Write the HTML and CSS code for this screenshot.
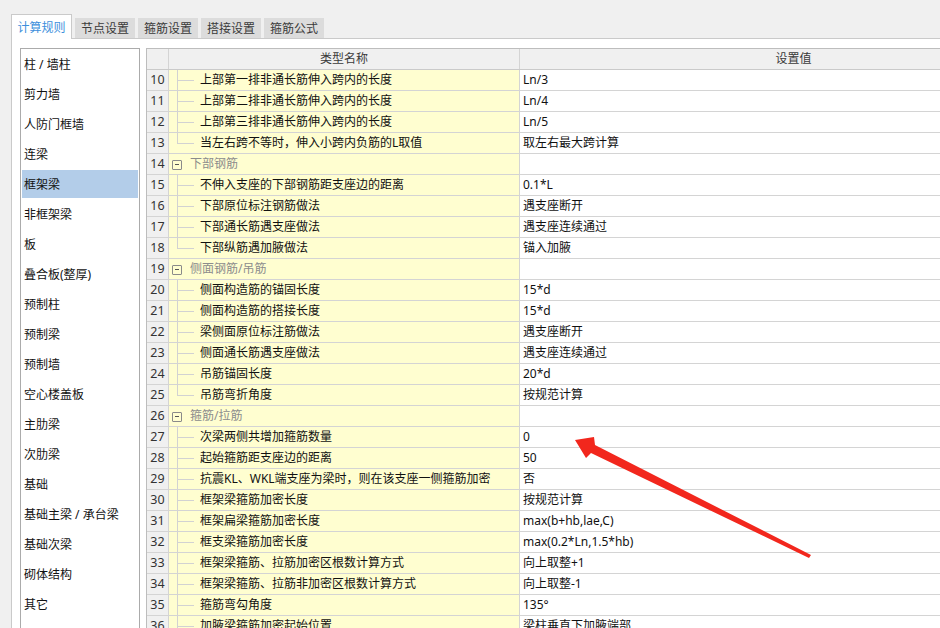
FILE: index.html
```html
<!DOCTYPE html>
<html lang="zh">
<head>
<meta charset="utf-8">
<title>计算规则</title>
<link rel="stylesheet" href="styles.css">
</head>
<body>
<div class="app">
  <div class="tabs">
    <div class="tab active">计算规则</div>
    <div class="tab">节点设置</div>
    <div class="tab">箍筋设置</div>
    <div class="tab">搭接设置</div>
    <div class="tab">箍筋公式</div>
  </div>
  <div class="panel">
    <ul class="side-list">
      <li>柱 / 墙柱</li>
      <li>剪力墙</li>
      <li>人防门框墙</li>
      <li>连梁</li>
      <li class="selected">框架梁</li>
      <li>非框架梁</li>
      <li>板</li>
      <li>叠合板(整厚)</li>
      <li>预制柱</li>
      <li>预制梁</li>
      <li>预制墙</li>
      <li>空心楼盖板</li>
      <li>主肋梁</li>
      <li>次肋梁</li>
      <li>基础</li>
      <li>基础主梁 / 承台梁</li>
      <li>基础次梁</li>
      <li>砌体结构</li>
      <li>其它</li>
    </ul>
    <div class="grid">
      <div class="row header">
        <div class="num"></div>
        <div class="name">类型名称</div>
        <div class="value">设置值</div>
      </div>
      <div class="row child"><div class="num">10</div><div class="name"><span class="branch"></span>上部第一排非通长筋伸入跨内的长度</div><div class="value">Ln/3</div></div>
      <div class="row child"><div class="num">11</div><div class="name"><span class="branch"></span>上部第二排非通长筋伸入跨内的长度</div><div class="value">Ln/4</div></div>
      <div class="row child"><div class="num">12</div><div class="name"><span class="branch"></span>上部第三排非通长筋伸入跨内的长度</div><div class="value">Ln/5</div></div>
      <div class="row child last"><div class="num">13</div><div class="name"><span class="branch"></span>当左右跨不等时，伸入小跨内负筋的L取值</div><div class="value">取左右最大跨计算</div></div>
      <div class="row group"><div class="num">14</div><div class="name"><span class="toggle"></span>下部钢筋</div><div class="value"></div></div>
      <div class="row child"><div class="num">15</div><div class="name"><span class="branch"></span>不伸入支座的下部钢筋距支座边的距离</div><div class="value">0.1*L</div></div>
      <div class="row child"><div class="num">16</div><div class="name"><span class="branch"></span>下部原位标注钢筋做法</div><div class="value">遇支座断开</div></div>
      <div class="row child"><div class="num">17</div><div class="name"><span class="branch"></span>下部通长筋遇支座做法</div><div class="value">遇支座连续通过</div></div>
      <div class="row child last"><div class="num">18</div><div class="name"><span class="branch"></span>下部纵筋遇加腋做法</div><div class="value">锚入加腋</div></div>
      <div class="row group"><div class="num">19</div><div class="name"><span class="toggle"></span>侧面钢筋/吊筋</div><div class="value"></div></div>
      <div class="row child"><div class="num">20</div><div class="name"><span class="branch"></span>侧面构造筋的锚固长度</div><div class="value">15*d</div></div>
      <div class="row child"><div class="num">21</div><div class="name"><span class="branch"></span>侧面构造筋的搭接长度</div><div class="value">15*d</div></div>
      <div class="row child"><div class="num">22</div><div class="name"><span class="branch"></span>梁侧面原位标注筋做法</div><div class="value">遇支座断开</div></div>
      <div class="row child"><div class="num">23</div><div class="name"><span class="branch"></span>侧面通长筋遇支座做法</div><div class="value">遇支座连续通过</div></div>
      <div class="row child"><div class="num">24</div><div class="name"><span class="branch"></span>吊筋锚固长度</div><div class="value">20*d</div></div>
      <div class="row child last"><div class="num">25</div><div class="name"><span class="branch"></span>吊筋弯折角度</div><div class="value">按规范计算</div></div>
      <div class="row group"><div class="num">26</div><div class="name"><span class="toggle"></span>箍筋/拉筋</div><div class="value"></div></div>
      <div class="row child"><div class="num">27</div><div class="name"><span class="branch"></span>次梁两侧共增加箍筋数量</div><div class="value">0</div></div>
      <div class="row child"><div class="num">28</div><div class="name"><span class="branch"></span>起始箍筋距支座边的距离</div><div class="value">50</div></div>
      <div class="row child"><div class="num">29</div><div class="name"><span class="branch"></span>抗震KL、WKL端支座为梁时，则在该支座一侧箍筋加密</div><div class="value">否</div></div>
      <div class="row child"><div class="num">30</div><div class="name"><span class="branch"></span>框架梁箍筋加密长度</div><div class="value">按规范计算</div></div>
      <div class="row child"><div class="num">31</div><div class="name"><span class="branch"></span>框架扁梁箍筋加密长度</div><div class="value">max(b+hb,lae,C)</div></div>
      <div class="row child"><div class="num">32</div><div class="name"><span class="branch"></span>框支梁箍筋加密长度</div><div class="value">max(0.2*Ln,1.5*hb)</div></div>
      <div class="row child"><div class="num">33</div><div class="name"><span class="branch"></span>框架梁箍筋、拉筋加密区根数计算方式</div><div class="value">向上取整+1</div></div>
      <div class="row child"><div class="num">34</div><div class="name"><span class="branch"></span>框架梁箍筋、拉筋非加密区根数计算方式</div><div class="value">向上取整-1</div></div>
      <div class="row child"><div class="num">35</div><div class="name"><span class="branch"></span>箍筋弯勾角度</div><div class="value">135°</div></div>
      <div class="row child"><div class="num">36</div><div class="name"><span class="branch"></span>加腋梁箍筋加密起始位置</div><div class="value">梁柱垂直下加腋端部</div></div>
    </div>
  </div>
  <svg class="arrow" width="940" height="628" viewBox="0 0 940 628">
    <polygon points="575,440 594,437 595,445 811,555 809,558 591,453 586,458" fill="#f2271d"/>
  </svg>
</div>
</body>
</html>
```

FILE: styles.css
```css
* { box-sizing: border-box; }
html, body {
  margin: 0;
  padding: 0;
  width: 940px;
  height: 628px;
  overflow: hidden;
  background: #f0f0f0;
  font-family: "Noto Sans", "Noto Sans CJK SC", sans-serif;
  font-size: 12px;
  color: #111;
}
.app {
  position: relative;
  width: 940px;
  height: 628px;
  overflow: hidden;
}
.tabs {
  display: flex;
  align-items: flex-end;
  height: 38px;
  padding-left: 11px;
  gap: 3px;
}
.tab {
  width: 60px;
  height: 20px;
  line-height: 21px;
  text-align: center;
  background: #dcdcdc;
  color: #3a3a3a;
  white-space: nowrap;
}
.tab.active {
  position: relative;
  z-index: 1;
  width: 61px;
  height: 25px;
  line-height: 26px;
  margin-bottom: -1px;
  background: #fff;
  border: 1px solid #cacaca;
  border-bottom: none;
  color: #3d8fdc;
}
.panel {
  display: flex;
  align-items: flex-start;
  gap: 6px;
  width: 1200px;
  height: 700px;
  margin-left: 11px;
  padding: 9px 0 0 8px;
  background: #fff;
  border-left: 1px solid #cacaca;
  border-top: 1px solid #cacaca;
}
.side-list {
  display: flex;
  flex-direction: column;
  flex: none;
  width: 120px;
  height: 640px;
  margin: 0;
  padding: 0;
  list-style: none;
  border: 1px solid #ababab;
  background: #fff;
}
.side-list li {
  height: 28px;
  margin: 1px;
  padding-left: 2px;
  line-height: 30px;
  white-space: nowrap;
}
.side-list li.selected {
  background: #b3cde9;
}
.grid {
  flex: none;
  width: 921px;
  border-left: 1px solid #bdbdbd;
  border-top: 1px solid #bdbdbd;
}
.row {
  display: flex;
  height: 21px;
  border-bottom: 1px solid #d4d4d4;
}
.row > div {
  height: 20px;
  line-height: 20px;
  white-space: nowrap;
}
.num {
  flex: none;
  width: 22px;
  border-right: 1px solid #d4d4d4;
  background: #f0f0f0;
  color: #333;
  text-align: center;
  font-size: 12.5px;
}
.name {
  flex: none;
  display: flex;
  align-items: center;
  width: 351px;
  padding-left: 8px;
  border-right: 1px solid #d4d4d4;
  background: #fffed0;
}
.value {
  flex: 1;
  padding-left: 3px;
  background: #fff;
}
.header {
  border-bottom-color: #cacaca;
}
.header > div {
  background: #f0f0f0;
  color: #3a3a3a;
  text-align: center;
}
.header .name {
  display: block;
  padding-left: 0;
}
.header .value {
  padding-left: 0;
  text-align: center;
}
.branch {
  flex: none;
  align-self: stretch;
  width: 23px;
  background:
    linear-gradient(#d2d2d2, #d2d2d2) 0 0 / 1px 100% no-repeat,
    linear-gradient(#d2d2d2, #d2d2d2) 0 10px / 17px 1px no-repeat;
}
.last .branch {
  background:
    linear-gradient(#d2d2d2, #d2d2d2) 0 0 / 1px 11px no-repeat,
    linear-gradient(#d2d2d2, #d2d2d2) 0 10px / 17px 1px no-repeat;
}
.group .name {
  padding-left: 3px;
  color: #8c8c8c;
}
.toggle {
  flex: none;
  width: 10px;
  height: 10px;
  margin-right: 8px;
  margin-top: 1px;
  border: 1px solid #8a8a8a;
  border-radius: 1px;
  background: linear-gradient(#555, #555) center / 4px 1px no-repeat;
}
.arrow {
  position: absolute;
  left: 0;
  top: 0;
  pointer-events: none;
}
```
